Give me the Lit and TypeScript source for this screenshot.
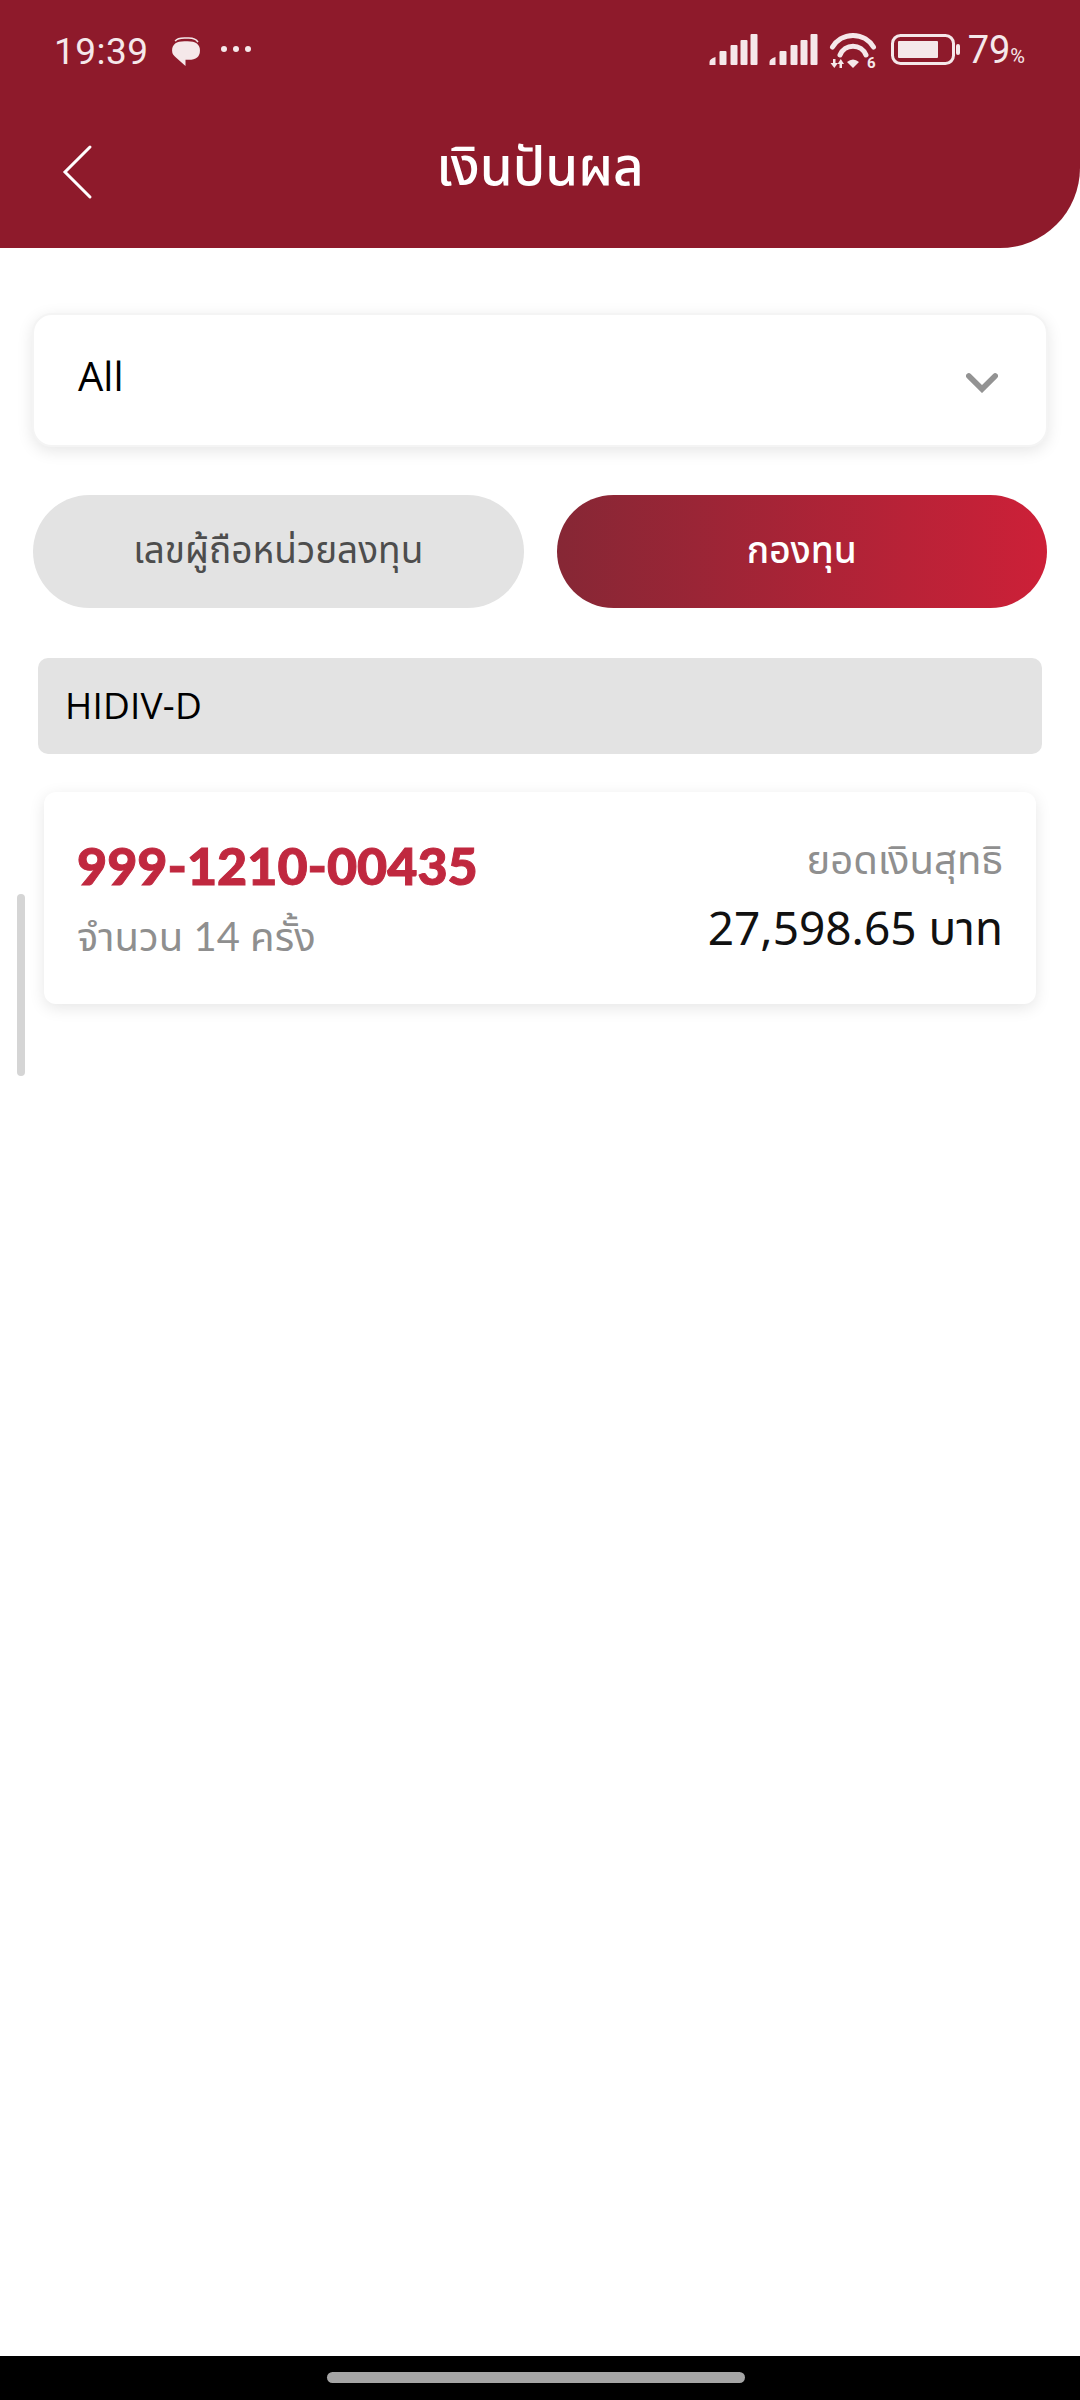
import { LitElement, html, css } from "lit";
import { customElement } from "lit/decorators.js";

@customElement("app-root")
export class AppRoot extends LitElement {
  static styles = css`
    :host { display: flex; flex-direction: column; width: 1080px; height: 2400px; background: #fff; position: relative; font-family: "Noto Sans", "Noto Sans Thai", sans-serif; color: #000; overflow: hidden; }
    * { box-sizing: border-box; }
    .header { height: 248px; background: #8e1a2b; border-bottom-right-radius: 80px; display: flex; flex-direction: column; flex: none; }
    .status { height: 100px; display: flex; align-items: center; padding: 0 55px 0 54px; color: #f5e8ea; }
    .time { font: 400 37px/1 Roboto, sans-serif; letter-spacing: .5px; position: relative; top: 1px; }
    .bubble { width: 31px; height: 31px; margin-left: 21px; margin-top: 3px; }
    .dots { width: 32px; height: 8px; margin-left: 19px; margin-top: -2px; }
    .right { margin-left: auto; display: flex; align-items: center; }
    .sig { width: 49px; height: 32px; margin-right: 11px; }
    .wifi { width: 48px; height: 40px; margin-right: 14px; margin-top: 4px; }
    .batt { width: 70px; height: 32px; margin-right: 7px; }
    .pct { font: 400 38px/1 Roboto, sans-serif; }
    .pct small { font-size: 20px; }
    .nav { flex: 1; position: relative; display: flex; align-items: center; justify-content: center; padding-bottom: 18px; }
    .back { position: absolute; left: 60px; top: 44px; width: 34px; height: 56px; }
    .title { color: #fff; font-size: 53px; font-weight: 500; line-height: 64px; }
    .main { flex: 1; padding: 65px 33px 0; display: flex; flex-direction: column; }
    .select { height: 134px; margin: 0 -1px; border: 2px solid #f4f4f4; border-radius: 20px; background: #fff; box-shadow: 0 4px 16px rgba(0,0,0,.1); display: flex; align-items: center; justify-content: space-between; padding: 0 48px 10px 44px; font-family: "Open Sans", sans-serif; font-size: 40px; }
    .chev { width: 32px; height: 21px; margin-top: 14px; }
    .tabs { display: flex; gap: 33px; margin-top: 48px; }
    .tab { height: 113px; flex: 1; border-radius: 57px; display: flex; align-items: center; justify-content: center; font-size: 37px; background: #e3e3e3; color: #4d4d4d; font-weight: 400; }
    .tab.on { background: linear-gradient(90deg, #862735, #cd2038); color: #fff; font-weight: 500; }
    .group { margin: 50px 5px 0; height: 96px; border-radius: 10px; background: #e3e3e3; display: flex; align-items: center; padding: 0 0 4px 27px; font-family: "Open Sans", sans-serif; font-size: 37px; font-weight: 500; letter-spacing: .2px; }
    .card { margin: 38px 11px 0; height: 212px; border-radius: 12px; background: #fff; box-shadow: 0 4px 16px rgba(0,0,0,.1); display: flex; justify-content: space-between; align-items: center; padding: 0 33px; }
    .col { display: flex; flex-direction: column; gap: 10px; }
    .num { color: #c0283f; font-family: Lato, sans-serif; font-size: 52px; font-weight: 900; line-height: 66px; -webkit-text-stroke: 1px #c0283f; }
    .sub { color: #8f8f8f; font-family: Lato, "Noto Sans Thai", sans-serif; font-size: 40px; line-height: 56px; font-weight: 400; }
    .col.r { text-align: right; padding-bottom: 8px; }
    .amt { font-size: 46px; line-height: 60px; color: #111; }
    .scroll { position: absolute; left: 17px; top: 894px; width: 8px; height: 182px; border-radius: 4px; background: #d5d5d5; }
    .home { flex: none; height: 44px; background: #000; display: flex; justify-content: center; align-items: center; }
    .handle { width: 418px; height: 11px; border-radius: 6px; background: #a5a5a5; margin-right: 8px; margin-top: -2px; }
  `;

  private sig() {
    return html`<svg class="sig" viewBox="0 0 48 32" fill="currentColor">
      <path d="M0 31v-3q0-3 6-5v8z"/><rect x="10" y="17" width="7" height="14" rx="1"/><rect x="21" y="11" width="7" height="20" rx="1"/><rect x="31" y="6" width="7" height="25" rx="1"/><rect x="41" y="0" width="7" height="31" rx="1"/>
    </svg>`;
  }

  render() {
    return html`
      <div class="header">
        <div class="status">
          <span class="time">19:39</span>
          <svg class="bubble" viewBox="0 0 30 30" fill="currentColor">
            <path d="M5 5q2-3 9-3h4q7 0 9 4" fill="none" stroke="currentColor" stroke-width="1.5"/>
            <path d="M2 14q0-9 12-9h3q12 0 12 9t-11 9h-3v6l-9-8q-4-3-4-7z"/>
          </svg>
          <svg class="dots" viewBox="0 0 32 8" fill="currentColor"><circle cx="4" cy="4" r="3"/><circle cx="16" cy="4" r="3"/><circle cx="28" cy="4" r="3"/></svg>
          <div class="right">
            ${this.sig()}${this.sig()}
            <svg class="wifi" viewBox="0 0 48 40" fill="none" stroke="currentColor" stroke-width="5" stroke-linecap="round">
              <path d="M3.5 15A24 24 0 0 1 44.5 15"/><path d="M11 23A14 14 0 0 1 37 23"/>
              <path d="M18 30Q24 25 30 30L24 36z" fill="currentColor" stroke="none"/>
              <g fill="currentColor" stroke="none">
                <rect x="4" y="27" width="2.5" height="5"/><path d="M1.5 31h7.5l-3.7 5z"/>
                <rect x="10.5" y="31" width="2.5" height="5"/><path d="M8.5 32h6.5l-3.2-5z"/>
              </g>
              <text x="38" y="36" font-family="Roboto" font-weight="700" font-size="15" fill="currentColor" stroke="none">6</text>
            </svg>
            <svg class="batt" viewBox="0 0 70 32">
              <rect x="1.5" y="1.5" width="61" height="28" rx="8" fill="none" stroke="currentColor" stroke-width="3"/>
              <rect x="7" y="7" width="40" height="17" rx="1" fill="currentColor"/>
              <rect x="65" y="10" width="4" height="11" rx="2" fill="currentColor"/>
            </svg>
            <span class="pct">79<small>%</small></span>
          </div>
        </div>
        <div class="nav">
          <svg class="back" viewBox="0 0 34 56" fill="none" stroke="#fff" stroke-width="3" stroke-linecap="round"><path d="M30 3L5 28l25 25"/></svg>
          <span class="title">เงินปันผล</span>
        </div>
      </div>
      <div class="main">
        <div class="select">
          <span>All</span>
          <svg class="chev" viewBox="0 0 34 22" fill="none" stroke="#939393" stroke-width="6" stroke-linecap="round" stroke-linejoin="miter"><path d="M3 4l14 14L31 4"/></svg>
        </div>
        <div class="tabs">
          <div class="tab">เลขผู้ถือหน่วยลงทุน</div>
          <div class="tab on">กองทุน</div>
        </div>
        <div class="group">HIDIV-D</div>
        <div class="card">
          <div class="col">
            <span class="num">999-1210-00435</span>
            <span class="sub">จำนวน 14 ครั้ง</span>
          </div>
          <div class="col r">
            <span class="sub">ยอดเงินสุทธิ</span>
            <span class="amt">27,598.65 บาท</span>
          </div>
        </div>
      </div>
      <div class="scroll"></div>
      <div class="home"><div class="handle"></div></div>
    `;
  }
}
